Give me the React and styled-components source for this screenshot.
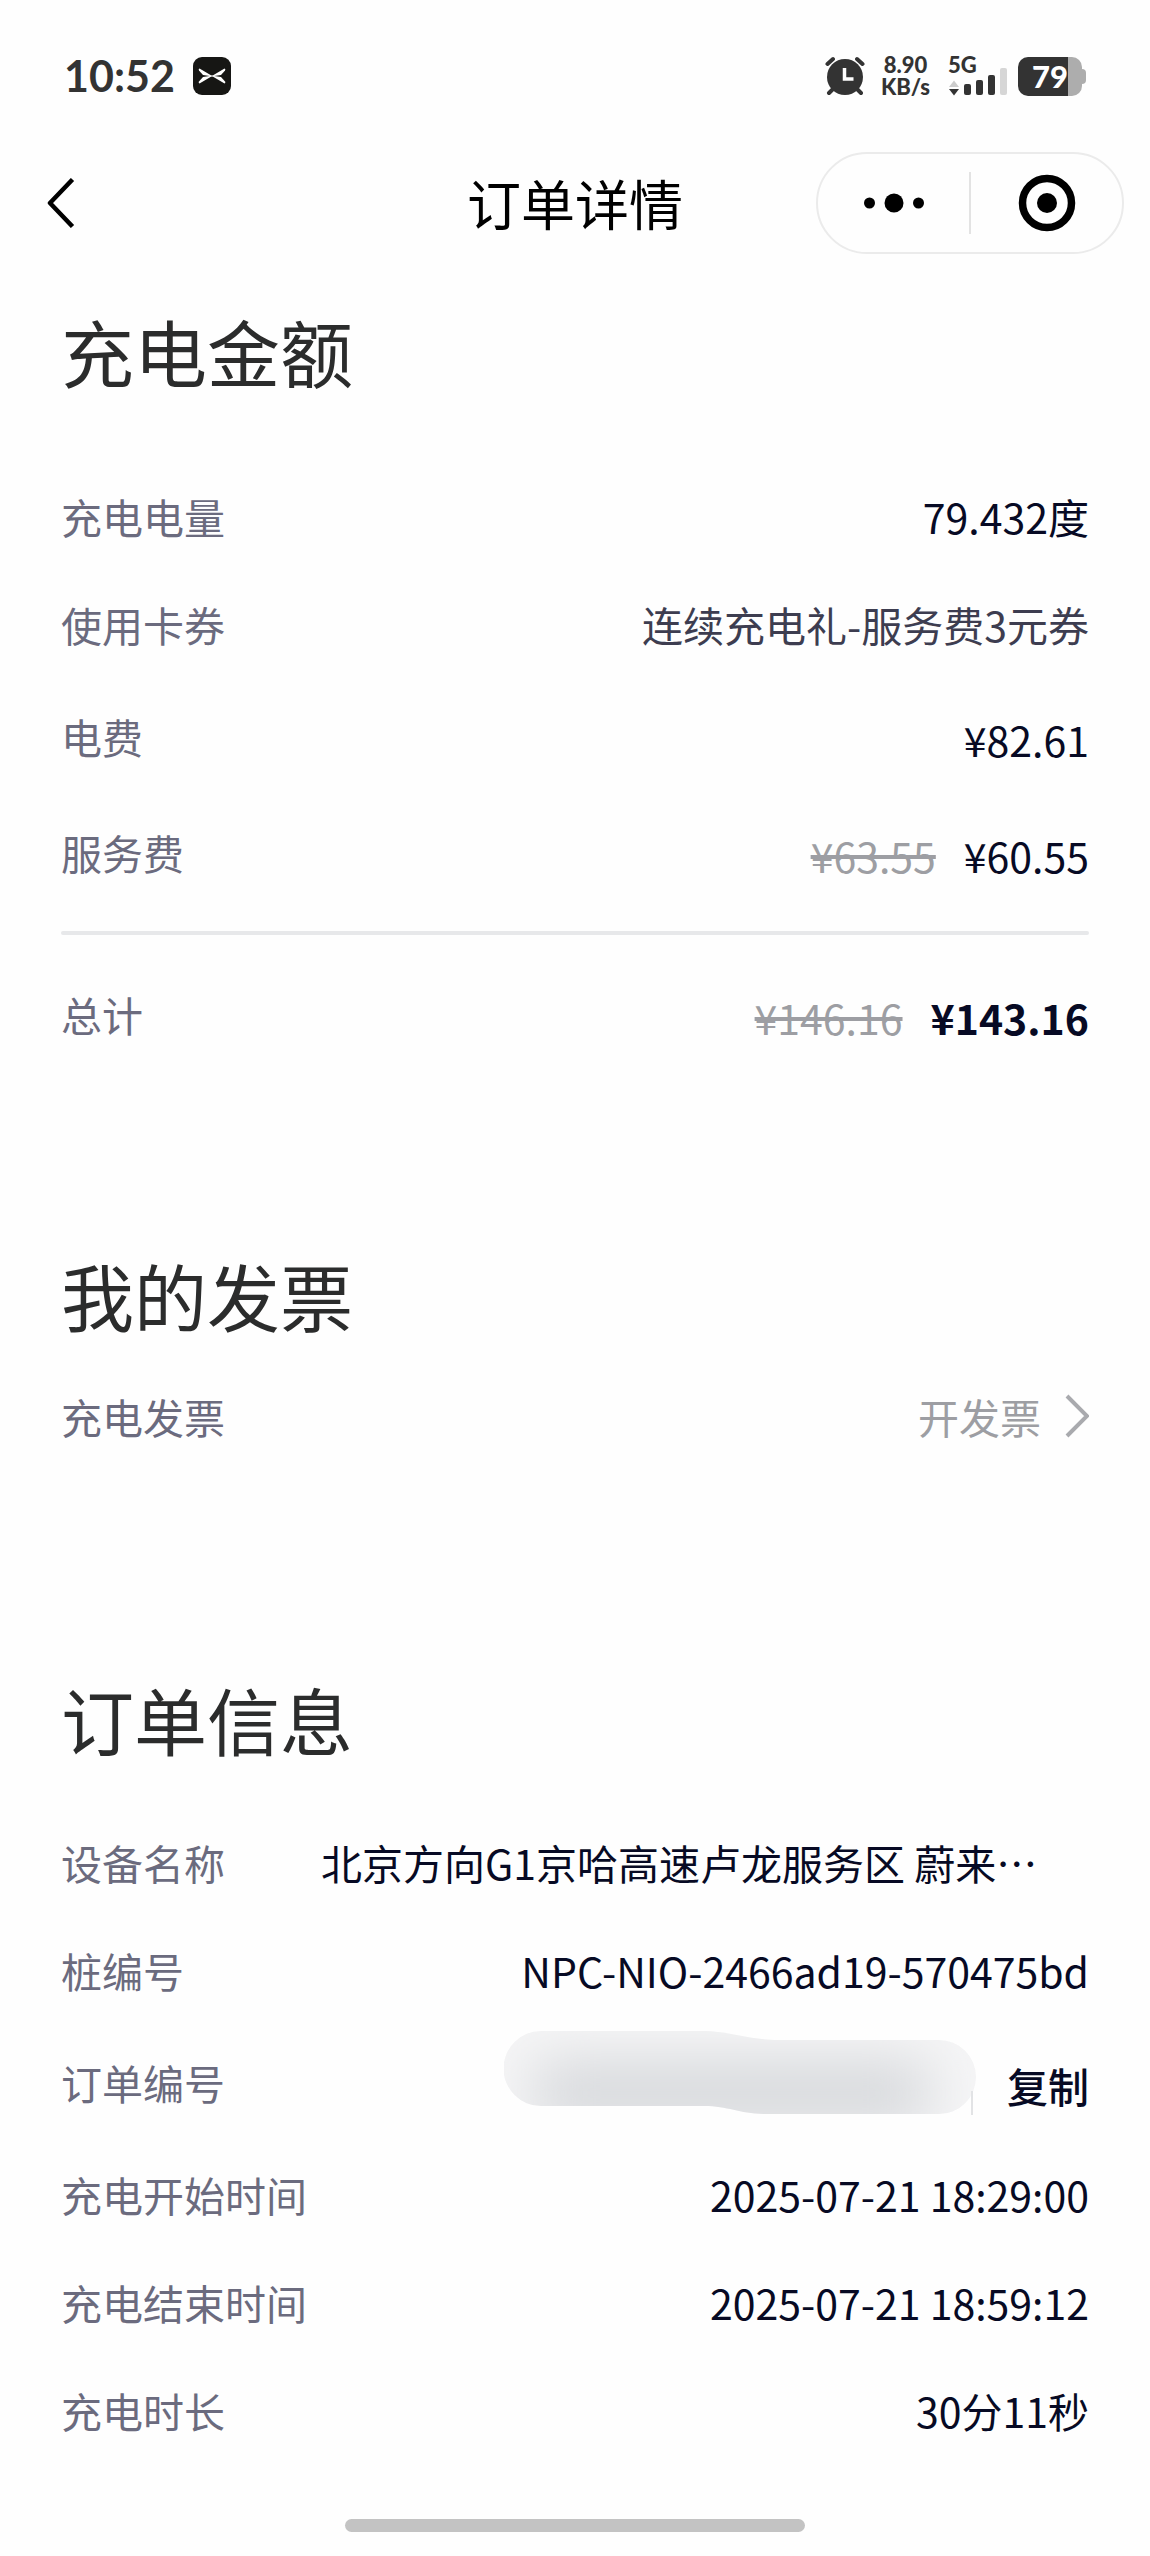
import React, { useState } from "react";
import styled, { createGlobalStyle } from "styled-components";

const charges = [
  { label: "充电电量", value: "79.432度" },
  { label: "使用卡券", value: "连续充电礼-服务费3元券", muted: true },
  { label: "电费", price: "¥82.61" },
  { label: "服务费", price: "¥60.55", oldPrice: "¥63.55" },
];

const times = [
  { label: "充电开始时间", value: "2025-07-21 18:29:00" },
  { label: "充电结束时间", value: "2025-07-21 18:59:12" },
  { label: "充电时长", value: "30分11秒" },
];

function AlarmIcon() {
  return (
    <svg width="40" height="40" viewBox="0 0 40 40" aria-hidden="true">
      <g stroke="#333" strokeWidth="4" strokeLinecap="round" fill="none">
        <path d="M2.500 8 8 3M37.500 8 32 3M8 33l-4 4M32 33l4 4" />
      </g>
      <circle cx="20" cy="21" r="18" fill="#333" />
      <path d="M19.500 12v11h9" stroke="#fff" strokeWidth="3.500" fill="none" />
    </svg>
  );
}

function AppIcon() {
  return (
    <svg width="38" height="38" viewBox="0 0 38 38" aria-hidden="true">
      <rect width="38" height="38" rx="9" fill="#161614" />
      <g fill="#fff">
        <path d="M20 19.500 6.500 11.500Q5 12 6 13.500L10 18Z" />
        <path d="M20 18.500 6.500 26.500Q5 26 6 24.500L10 20Z" />
        <path d="M18 19.500 31.500 11.500Q33 12 32 13.500L28 18Z" />
        <path d="M18 18.500 31.500 26.500Q33 26 32 24.500L28 20Z" />
      </g>
    </svg>
  );
}

function SignalBars() {
  return (
    <svg width="60" height="40" viewBox="0 0 60 40" aria-hidden="true">
      <path d="M6 24.500 11 31H1z" fill="#ccc" />
      <path d="M1 33h10l-5 6.500z" fill="#333" />
      <rect x="16" y="28" width="7" height="11" rx="2" fill="#333" />
      <rect x="28" y="24" width="7" height="15" rx="2" fill="#333" />
      <rect x="40" y="19" width="7" height="20" rx="2" fill="#333" />
      <rect x="52" y="12" width="7" height="27" rx="2" fill="#d6d6d6" />
    </svg>
  );
}

function HiddenNumber() {
  return (
    <svg width="472" height="84" viewBox="0 0 472 84" role="img" aria-label="订单编号已隐藏">
      <defs>
        <clipPath id="pill">
          <path d="M37 0H200C225 0 245 9 275 9H435A37 37 0 0 1 435 83H262C235 83 225 75 200 75H37A37 37 0 0 1 37 0Z" />
        </clipPath>
        <filter id="soft" x="-30%" y="-100%" width="160%" height="300%">
          <feGaussianBlur stdDeviation="28" />
        </filter>
      </defs>
      <g clipPath="url(#pill)">
        <rect width="472" height="84" fill="#f5f5f6" />
        <rect x="30" y="30" width="395" height="64" fill="#d6d8db" filter="url(#soft)" />
      </g>
      <path d="M468 60v24" stroke="#e2e3e5" strokeWidth="2" />
    </svg>
  );
}

function Row({ label, children, tall }) {
  return (
    <RowBox $tall={tall}>
      <dt>{label}</dt>
      <dd>{children}</dd>
    </RowBox>
  );
}

export default function App() {
  const [copied, setCopied] = useState(false);

  return (
    <>
      <GlobalStyle />
      <Page lang="zh-CN">
        <StatusBar>
          <Clock>
            10:52
            <AppIcon />
          </Clock>
          <StatusIcons>
            <AlarmIcon />
            <Speed>
              <span>8.90</span>
              <span>KB/s</span>
            </Speed>
            <Signal>
              <SignalBars />
              <span>5G</span>
            </Signal>
            <Battery>79</Battery>
          </StatusIcons>
        </StatusBar>

        <NavBar>
          <BackButton type="button" aria-label="返回">
            <svg width="28" height="50" viewBox="0 0 28 50">
              <path d="M25.500 1.500 3 25l22.500 23.500" stroke="#000" strokeWidth="4.500" strokeLinejoin="round" fill="none" />
            </svg>
          </BackButton>
          <h1>订单详情</h1>
          <Capsule>
            <button type="button" aria-label="更多">
              <svg width="60" height="20" viewBox="0 0 60 20">
                <circle cx="5.500" cy="10" r="5.500" />
                <circle cx="30" cy="10" r="9.500" />
                <circle cx="54.500" cy="10" r="5.500" />
              </svg>
            </button>
            <button type="button" aria-label="关闭">
              <svg width="58" height="58" viewBox="0 0 58 58">
                <circle cx="29" cy="29" r="24.500" fill="none" stroke="#000" strokeWidth="7.500" />
                <circle cx="29" cy="29" r="10" />
              </svg>
            </button>
          </Capsule>
        </NavBar>

        <main>
          <Section $top={52} $gap={68}>
            <h2>充电金额</h2>
            <dl>
              {charges.map((item) => (
                <Row key={item.label} label={item.label} tall={!!item.price}>
                  {item.oldPrice && <OldPrice>{item.oldPrice}</OldPrice>}
                  {item.price && <Price>{item.price}</Price>}
                  {item.value && <Value $muted={item.muted}>{item.value}</Value>}
                </Row>
              ))}
            </dl>
            <Divider />
            <dl>
              <Row label="总计" tall>
                <OldPrice>¥146.16</OldPrice>
                <Price $bold>¥143.16</Price>
              </Row>
            </dl>
          </Section>

          <Section $top={178} $gap={24}>
            <h2>我的发票</h2>
            <dl>
              <Row label="充电发票">
                <InvoiceLink href="#invoice">
                  开发票
                  <svg width="24" height="44" viewBox="0 0 24 44" aria-hidden="true">
                    <path d="M2 2l20 20L2 42" stroke="#a9aaae" strokeWidth="4" fill="none" />
                  </svg>
                </InvoiceLink>
              </Row>
            </dl>
          </Section>

          <Section $top={204} $gap={46}>
            <h2>订单信息</h2>
            <dl>
              <Row label="设备名称">
                <StationName>北京方向G1京哈高速卢龙服务区 蔚来…</StationName>
              </Row>
              <Row label="桩编号">
                <Value>NPC-NIO-2466ad19-570475bd</Value>
              </Row>
              <Row label="订单编号" tall>
                <OrderNumber>
                  <HiddenNumber />
                </OrderNumber>
                <CopyButton type="button" aria-pressed={copied} onClick={() => setCopied(true)}>
                  复制
                </CopyButton>
              </Row>
              {times.map((item) => (
                <Row key={item.label} label={item.label}>
                  <Value>{item.value}</Value>
                </Row>
              ))}
            </dl>
          </Section>
        </main>

        <HomeBar />
      </Page>
    </>
  );
}

const GlobalStyle = createGlobalStyle`
  * {
    box-sizing: border-box;
  }
  body {
    margin: 0;
    background-color: #fefefe;
    font-family: "Noto Sans CJK SC", sans-serif;
  }
  button {
    padding: 0;
    border: none;
    background: none;
    font-family: inherit;
    cursor: pointer;
  }
  svg {
    display: block;
    flex-shrink: 0;
  }
`;

const Page = styled.div`
  display: flex;
  flex-direction: column;
`;

const StatusBar = styled.header`
  display: flex;
  justify-content: space-between;
  align-items: center;
  height: 152px;
  padding: 0 64px;
  color: #333;
`;

const Clock = styled.div`
  display: flex;
  align-items: center;
  gap: 18px;
  font-family: Lato, sans-serif;
  font-size: 43px;
  font-weight: 700;
  line-height: 48px;
`;

const StatusIcons = styled.div`
  display: flex;
  align-items: center;
`;

const Speed = styled.div`
  display: flex;
  flex-direction: column;
  align-items: center;
  margin: 0 18px 0 16px;
  font-family: Lato, sans-serif;
  font-size: 22px;
  font-weight: 900;
  line-height: 22px;
`;

const Signal = styled.div`
  position: relative;
  margin-right: 10px;
  span {
    position: absolute;
    top: 0;
    left: 0;
    font-family: Lato, sans-serif;
    font-size: 22px;
    font-weight: 900;
    line-height: 18px;
  }
`;

const Battery = styled.div`
  position: relative;
  width: 64px;
  height: 39px;
  margin-right: 4px;
  padding-left: 14px;
  border-radius: 10px;
  background: linear-gradient(to right, #333 50px, #adadad 50px);
  color: #fff;
  font-family: Lato, sans-serif;
  font-size: 31px;
  font-weight: 900;
  line-height: 39px;
  &::after {
    content: "";
    position: absolute;
    top: 12px;
    right: -4px;
    width: 4px;
    height: 15px;
    border-radius: 0 4px 4px 0;
    background-color: #adadad;
  }
`;

const NavBar = styled.nav`
  display: grid;
  grid-template-columns: 1fr auto 1fr;
  align-items: center;
  height: 102px;
  padding: 0 26px;
  h1 {
    margin: 0;
    color: #000;
    font-size: 54px;
    font-weight: 400;
    line-height: 80px;
  }
`;

const BackButton = styled.button`
  justify-self: start;
  margin-left: 21px;
`;

const Capsule = styled.div`
  display: flex;
  justify-self: end;
  align-items: center;
  width: 308px;
  height: 102px;
  border: 2px solid #ebebeb;
  border-radius: 51px;
  button {
    display: flex;
    flex: 1;
    justify-content: center;
    align-items: center;
    height: 62px;
  }
  button + button {
    border-left: 2px solid #e3e3e3;
  }
`;

const Section = styled.section`
  margin-top: ${({ $top }) => $top}px;
  padding: 0 61px;
  h2 {
    margin: 0 0 ${({ $gap }) => $gap}px;
    color: #2b2c2c;
    font-size: 73px;
    font-weight: 400;
    line-height: 88px;
  }
  dl {
    margin: 0;
  }
`;

const RowBox = styled.div`
  display: flex;
  align-items: center;
  justify-content: space-between;
  height: ${({ $tall }) => ($tall ? 116 : 108)}px;
  font-size: 41px;
  line-height: 60px;
  white-space: nowrap;
  dt {
    color: #6b6b7e;
  }
  dd {
    display: flex;
    flex: 1;
    align-items: center;
    justify-content: flex-end;
    margin: 0;
  }
`;

const Value = styled.span`
  color: ${({ $muted }) => ($muted ? "#3d3d50" : "#070a24")};
`;

const Price = styled.span`
  padding-top: 6px;
  color: #070a24;
  font-weight: ${({ $bold }) => ($bold ? 700 : 400)};
`;

const OldPrice = styled.del`
  margin-right: 28px;
  padding-top: 6px;
  color: #9d9ea3;
`;

const StationName = styled.span`
  flex: 1;
  margin-left: 96px;
  overflow: hidden;
  color: #070a24;
  text-overflow: ellipsis;
`;

const OrderNumber = styled.div`
  margin-right: 31px;
  margin-bottom: 18px;
`;

const CopyButton = styled.button`
  padding-top: 6px;
  color: #070a24;
  font-size: 41px;
  font-weight: 500;
  line-height: 60px;
`;

const InvoiceLink = styled.a`
  display: flex;
  align-items: center;
  gap: 24px;
  color: #9d9ea3;
  text-decoration: none;
`;

const Divider = styled.hr`
  height: 4px;
  margin: 21px 0;
  border: none;
  border-radius: 2px;
  background-color: #e7e8ea;
`;

const HomeBar = styled.div`
  align-self: center;
  width: 40%;
  height: 13px;
  margin: 55px 0 20px;
  border-radius: 7px;
  background-color: #c3c3c3;
`;
